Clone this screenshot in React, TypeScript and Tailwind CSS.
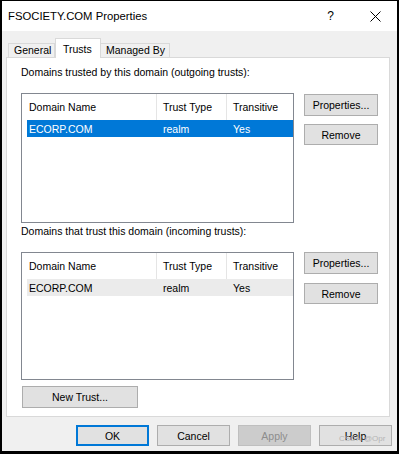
import React from "react";

const Btn = ({
  children,
  className = "",
}: {
  children: React.ReactNode;
  className?: string;
}) => (
  <div
    className={
      "flex items-center justify-center border border-[#adadad] bg-[#e1e1e1] text-black " +
      className
    }
  >
    {children}
  </div>
);

const ListBox = ({
  selected,
  h,
}: {
  selected: boolean;
  h: string;
}) => (
  <div className={"w-[273px] border border-[#828790] bg-white flex flex-col " + h}>
    <div className="flex h-[26px] items-stretch">
      <div className="w-[135px] pl-[7px] flex items-center border-r border-[#e5e5e5]">Domain Name</div>
      <div className="w-[70px] pl-[6px] flex items-center border-r border-[#e5e5e5]">Trust Type</div>
      <div className="flex-1 pl-[6px] flex items-center">Transitive</div>
    </div>
    <div
      className={
        "ml-[5px] flex h-[17px] items-center " +
        (selected ? "bg-[#0078d7] text-white" : "bg-[#ebebeb] text-black")
      }
    >
      <div className="w-[130px] pl-[2px]">ECORP.COM</div>
      <div className="w-[70px] pl-[6px]">realm</div>
      <div className="flex-1 pl-[6px]">Yes</div>
    </div>
  </div>
);

export default function App() {
  return (
    <div className="w-[399px] h-[454px] bg-black pt-px pl-[2px] pr-[2px] pb-[3px] font-['Liberation_Sans',Arial,sans-serif] text-[10.5px] leading-[14px] text-black">
      <div className="flex flex-col h-full bg-[#f0f0f0]">
        {/* Title bar */}
        <div className="h-[30px] bg-white flex items-center pl-[6px]">
          <span className="text-[11.3px]">FSOCIETY.COM Properties</span>
          <div className="flex-1" />
          <span className="text-[12px] mr-[36px]">?</span>
          <svg width="11" height="11" viewBox="0 0 11 11" className="mr-[16px]">
            <path d="M0.5 0.5 L10.5 10.5 M10.5 0.5 L0.5 10.5" stroke="#000" strokeWidth="1" />
          </svg>
        </div>

        {/* Body */}
        <div className="flex-1 px-[4px] flex flex-col">
          {/* Tabs */}
          <div className="mt-[7px] h-[19px] flex items-end pl-[2px]">
            <div className="h-[14px] w-[47px] border border-b-0 border-[#d9d9d9] bg-[#f0f0f0] pl-[5px] flex items-end leading-[13px]">
              General
            </div>
            <div className="relative z-10 -mb-px h-[20px] w-[46px] border border-b-0 border-[#d9d9d9] bg-white pl-[7px] pt-[3px]">
              Trusts
            </div>
            <div className="h-[14px] w-[69px] border border-b-0 border-l-0 border-[#d9d9d9] bg-[#f0f0f0] pl-[5px] flex items-end leading-[13px]">
              Managed By
            </div>
          </div>

          {/* Panel */}
          <div className="h-[360px] w-[384px] border border-[#d9d9d9] bg-white pl-[14px] flex flex-col">
            <div className="mt-[7px]">Domains trusted by this domain (outgoing trusts):</div>
            <div className="mt-[14px] flex items-start">
              <ListBox selected h="h-[130px]" />
              <div className="ml-[10px] mt-px flex flex-col">
                <Btn className="w-[74px] h-[22px]">Properties...</Btn>
                <Btn className="w-[74px] h-[21px] mt-[8px]">Remove</Btn>
              </div>
            </div>

            <div className="mt-px">Domains that trust this domain (incoming trusts):</div>
            <div className="mt-[14px] flex items-start">
              <ListBox selected={false} h="h-[128px]" />
              <div className="ml-[10px] flex flex-col">
                <Btn className="w-[74px] h-[22px]">Properties...</Btn>
                <Btn className="w-[74px] h-[21px] mt-[9px]">Remove</Btn>
              </div>
            </div>

            <Btn className="mt-[6px] ml-px w-[116px] h-[22px]">New Trust...</Btn>
          </div>

          {/* Bottom buttons */}
          <div className="mt-[8px] flex justify-end gap-[8px] pr-px">
            <Btn className="w-[73px] h-[21px] !border-2 !border-[#0078d7]">OK</Btn>
            <Btn className="w-[73px] h-[21px]">Cancel</Btn>
            <div className="w-[73px] h-[21px] flex items-center justify-center border border-[#bfbfbf] bg-[#cccccc] text-[#8d8d8d]">
              Apply
            </div>
            <Btn className="relative w-[73px] h-[21px]">
              Help
              <span className="absolute left-[19px] top-[8px] text-[8px] leading-[9px] text-[#b5b5b5]">
                CSDN @Opr
              </span>
            </Btn>
          </div>
        </div>
      </div>
    </div>
  );
}
